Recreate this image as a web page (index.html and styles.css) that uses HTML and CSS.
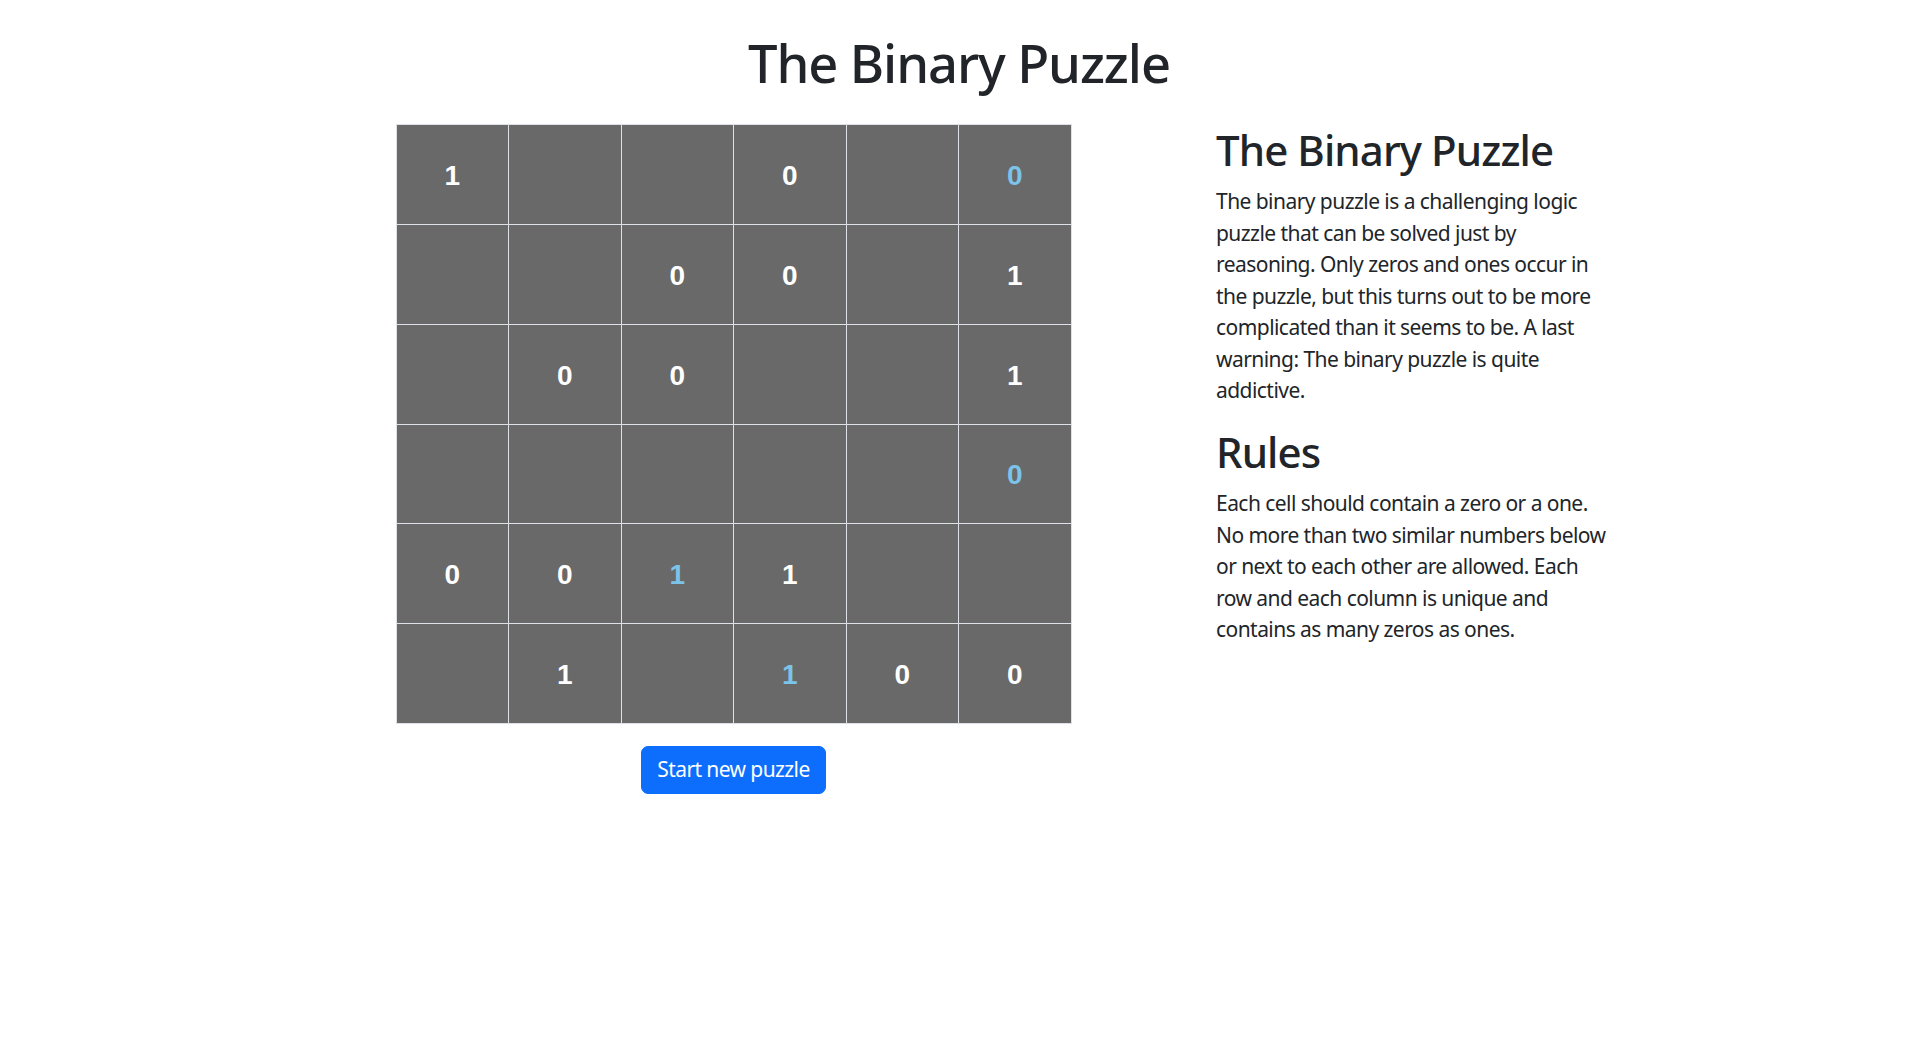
FILE: index.html
```html
<!DOCTYPE html>
<html lang="en">
<head>
<meta charset="utf-8">
<title>The Binary Puzzle</title>
<link rel="stylesheet" href="styles.css">
</head>
<body>
<h1 class="title">The Binary Puzzle</h1>
<div class="main">
  <div class="board-col">
    <div class="board">
      <div class="cell">1</div><div class="cell"></div><div class="cell"></div><div class="cell">0</div><div class="cell"></div><div class="cell hint">0</div>
      <div class="cell"></div><div class="cell"></div><div class="cell">0</div><div class="cell">0</div><div class="cell"></div><div class="cell">1</div>
      <div class="cell"></div><div class="cell">0</div><div class="cell">0</div><div class="cell"></div><div class="cell"></div><div class="cell">1</div>
      <div class="cell"></div><div class="cell"></div><div class="cell"></div><div class="cell"></div><div class="cell"></div><div class="cell hint">0</div>
      <div class="cell">0</div><div class="cell">0</div><div class="cell hint">1</div><div class="cell">1</div><div class="cell"></div><div class="cell"></div>
      <div class="cell"></div><div class="cell">1</div><div class="cell"></div><div class="cell hint">1</div><div class="cell">0</div><div class="cell">0</div>
    </div>
    <button class="btn">Start new puzzle</button>
  </div>
  <div class="info">
    <h2 class="heading">The Binary Puzzle</h2>
    <p class="text">The binary puzzle is a challenging logic<br>puzzle that can be solved just by<br>reasoning. Only zeros and ones occur in<br>the puzzle, but this turns out to be more<br>complicated than it seems to be. A last<br>warning: The binary puzzle is quite<br>addictive.</p>
    <h2 class="heading">Rules</h2>
    <p class="text">Each cell should contain a zero or a one.<br>No more than two similar numbers below<br>or next to each other are allowed. Each<br>row and each column is unique and<br>contains as many zeros as ones.</p>
  </div>
</div>
</body>
</html>
```
FILE: styles.css
```css
html, body {
  margin: 0;
  padding: 0;
  background: #fff;
}
body {
  font-family: "Noto Sans", "Open Sans", sans-serif;
  color: #212529;
  font-size: 21px;
  line-height: 1.5;
}
.title {
  margin: 31px 0 30px;
  padding-left: 11px;
  font-size: 52.5px;
  font-weight: 500;
  line-height: 1.2;
  letter-spacing: -1.1px;
  text-align: center;
}
.main {
  display: flex;
  align-items: flex-start;
  gap: 145px;
  margin-left: 396px;
}
.board-col {
  display: flex;
  flex-direction: column;
  align-items: center;
  width: 675px;
}
.board {
  display: grid;
  grid-template-columns: repeat(6, 1fr);
  grid-template-rows: repeat(6, 1fr);
  gap: 1px;
  padding: 1px;
  width: 676px;
  height: 600px;
  box-sizing: border-box;
  background: #dee2e6;
}
.cell {
  background: #696969;
  color: #fff;
  font-family: "Liberation Sans", Arial, sans-serif;
  font-weight: 700;
  font-size: 28px;
  padding-top: 3px;
  display: flex;
  align-items: center;
  justify-content: center;
}
.cell.hint {
  color: #7cc3ea;
}
.btn {
  margin-top: 22px;
  font-family: inherit;
  font-size: 21px;
  line-height: 1.5;
  letter-spacing: -0.6px;
  color: #fff;
  background: #0d6efd;
  border: 1px solid #0d6efd;
  border-radius: 7px;
  padding: 7px 15px;
  cursor: pointer;
}
.info {
  width: 420px;
  padding-top: 1px;
}
.heading {
  margin: 0 0 11px;
  font-size: 42px;
  font-weight: 500;
  line-height: 1.2;
  letter-spacing: -0.9px;
}
.text {
  margin: 0 0 20px;
  white-space: nowrap;
  letter-spacing: -0.55px;
}
```
